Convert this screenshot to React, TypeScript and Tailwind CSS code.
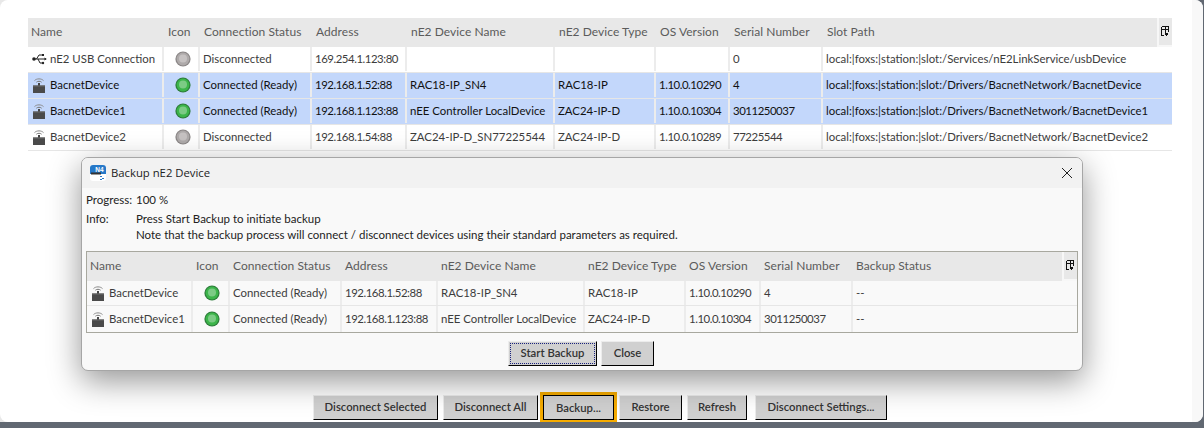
const font = "font-['Lato','Noto_Sans',sans-serif]";

type Row = {
  name: string;
  kind: "usb" | "device";
  on: boolean;
  status: string;
  address: string;
  deviceName: string;
  deviceType: string;
  os: string;
  serial: string;
  last: string;
  selected?: boolean;
};

const rows: Row[] = [
  { name: "nE2 USB Connection", kind: "usb", on: false, status: "Disconnected", address: "169.254.1.123:80", deviceName: "", deviceType: "", os: "", serial: "0", last: "local:|foxs:|station:|slot:/Services/nE2LinkService/usbDevice" },
  { name: "BacnetDevice", kind: "device", on: true, status: "Connected (Ready)", address: "192.168.1.52:88", deviceName: "RAC18-IP_SN4", deviceType: "RAC18-IP", os: "1.10.0.10290", serial: "4", last: "local:|foxs:|station:|slot:/Drivers/BacnetNetwork/BacnetDevice", selected: true },
  { name: "BacnetDevice1", kind: "device", on: true, status: "Connected (Ready)", address: "192.168.1.123:88", deviceName: "nEE Controller LocalDevice", deviceType: "ZAC24-IP-D", os: "1.10.0.10304", serial: "3011250037", last: "local:|foxs:|station:|slot:/Drivers/BacnetNetwork/BacnetDevice1", selected: true },
  { name: "BacnetDevice2", kind: "device", on: false, status: "Disconnected", address: "192.168.1.54:88", deviceName: "ZAC24-IP-D_SN77225544", deviceType: "ZAC24-IP-D", os: "1.10.0.10289", serial: "77225544", last: "local:|foxs:|station:|slot:/Drivers/BacnetNetwork/BacnetDevice2" },
];

const backupRows: Row[] = [
  { ...rows[1], selected: false, last: "--" },
  { ...rows[2], selected: false, last: "--" },
];

const Led = ({ on }: { on: boolean }) => (
  <svg width="16" height="16" viewBox="0 0 16 16">
    <circle cx="8" cy="8" r="7.6" fill={on ? "#2f7d3c" : "#8b8787"} />
    <circle cx="8" cy="8" r="6.4" fill={on ? "#3cb54a" : "#aeaaaa"} />
    <circle cx="8" cy="7.6" r="4" fill={on ? "#7ccb85" : "#c6c2c2"} />
  </svg>
);

const DeviceIcon = () => (
  <svg width="14" height="16" viewBox="0 0 14 16" fill="none">
    <path d="M2.5 3.6C4.6 1.3 9.4 1.3 11.5 3.6" stroke="#8a8a8a" strokeWidth="1" />
    <path d="M4.4 5.2C5.6 4 8.4 4 9.6 5.2" stroke="#777" strokeWidth="1" />
    <rect x="6" y="6" width="2" height="3" fill="#444" />
    <rect x="1" y="8.5" width="12" height="7.5" fill="#4a4a4a" />
    <rect x="1" y="8.5" width="12" height="1" fill="#6b6b6b" />
  </svg>
);

const UsbIcon = () => (
  <svg width="15" height="12" viewBox="0 0 15 12" fill="none">
    <circle cx="2" cy="6" r="1.8" fill="#222" />
    <path d="M2 6H14" stroke="#222" />
    <path d="M4.5 6L7 2H10M6 6L8 10H10" stroke="#222" />
    <rect x="10" y="1" width="2" height="2" fill="#222" />
    <circle cx="11" cy="10" r="1.2" fill="#222" />
    <path d="M12.5 4.5L14.8 6L12.5 7.5Z" fill="#222" />
  </svg>
);

const ColumnMenu = () => (
  <svg width="8" height="11" viewBox="0 0 8 11" shapeRendering="crispEdges" fill="none">
    <path d="M.5.5H7.5V5.5M.5.5V9.5H3M.5 3H7.5M4 .5V7" stroke="#111" />
    <path d="M3 6.5H8L5.5 10Z" fill="#111" />
  </svg>
);

const AppLogo = () => (
  <svg width="16" height="16" viewBox="0 0 16 16">
    <rect width="16" height="16" rx="3" fill="#fff" />
    <path d="M3 0H13A3 3 0 0 1 16 3V9H0V3A3 3 0 0 1 3 0Z" fill="#2678c8" />
    <text x="9.5" y="6.5" fontSize="6.5" fontWeight="700" fill="#fff" textAnchor="middle" fontFamily="Liberation Sans, sans-serif">N4</text>
    <rect x="1" y="7.5" width="10" height="2" fill="#333" />
    <rect x="10" y="11" width="2" height="1" fill="#2678c8" />
    <rect x="12" y="13" width="2" height="1" fill="#2678c8" />
    <rect x="10" y="14" width="2" height="1" fill="#2678c8" />
  </svg>
);

const Header = ({ grid, labels, cellPad }: { grid: string; labels: string[]; cellPad: string }) => (
  <div className={`${grid} h-[29px] bg-[#e8e8e8] text-[#5b5b5b] text-[12px] tracking-[0.05px]`}>
    {labels.map((label, i) => (
      <div key={label} className={`relative flex items-center ${cellPad} pb-[1px] whitespace-nowrap`}>
        {label}
        {i === labels.length - 1 && (
          <div className="absolute right-0 top-0 bottom-0 w-[15px] border-l-2 border-b-2 border-[#f7f7f7] flex items-center justify-center pr-[2px]">
            <ColumnMenu />
          </div>
        )}
      </div>
    ))}
  </div>
);

const Cell = ({ children, className = "" }: { children?: React.ReactNode; className?: string }) => (
  <div className={`flex items-center pl-[3px] border-r-2 border-[#ececec] last:border-r-0 whitespace-nowrap overflow-hidden ${className}`}>
    {children}
  </div>
);

const DataRow = ({ row, grid, height }: { row: Row; grid: string; height: string }) => {
  const sep = row.selected ? "border-[#d9e5fb]" : "";
  return (
    <div
      className={`${grid} ${height} border-b border-[#e6e6e6] text-[11.4px] ${row.selected ? "bg-[#c3d7fb] text-[#111] border-[#e3ecfb]" : "text-[#3c3c3c]"}`}
    >
      <Cell className={sep}>
        <span className="flex w-[19px] shrink-0 pl-[1px]">
          {row.kind === "usb" ? <UsbIcon /> : <DeviceIcon />}
        </span>
        {row.name}
      </Cell>
      <Cell className={`justify-center pl-0 ${sep}`}>
        <Led on={row.on} />
      </Cell>
      <Cell className={sep}>{row.status}</Cell>
      <Cell className={`tracking-[-0.45px] ${sep}`}>{row.address}</Cell>
      <Cell className={sep}>{row.deviceName}</Cell>
      <Cell className={sep}>{row.deviceType}</Cell>
      <Cell className={`tracking-[-0.45px] ${sep}`}>{row.os}</Cell>
      <Cell className={`tracking-[-0.45px] ${sep}`}>{row.serial}</Cell>
      <Cell>{row.last}</Cell>
    </div>
  );
};

const Button = ({ children, className = "" }: { children: React.ReactNode; className?: string }) => (
  <button
    className={`h-[25px] bg-[#d0d0d0] border-t border-l border-[#ececec] border-r border-b border-r-black border-b-black text-[11.3px] font-semibold text-[#333] ${className}`}
  >
    {children}
  </button>
);

const mainGrid = "grid grid-cols-[136px_36px_112px_95px_148px_101px_74px_93px_349px]";
const dialogGrid = "grid grid-cols-[106px_37px_112px_96px_147px_101px_75px_92px_224px]";

export default function App() {
  return (
    <div className={`${font} w-[1204px] h-[428px] overflow-hidden flex flex-col bg-[#616872] text-[12px]`}>
      <div className="relative h-[422px] bg-[linear-gradient(90deg,#e8e8e8_0,#e8e8e8_12px,#616872_12px)]">
        <div className="h-full w-[1203px] rounded-[8px] bg-white flex overflow-hidden">
          <div className="w-[1192px] flex flex-col pl-[28px] pr-[20px] pt-[18px]">
            <Header
              grid={mainGrid}
              cellPad="pl-[4px] first:pl-[3px]"
              labels={["Name", "Icon", "Connection Status", "Address", "nE2 Device Name", "nE2 Device Type", "OS Version", "Serial Number", "Slot Path"]}
            />
            <div className="flex flex-col">
              {rows.map((row) => (
                <DataRow key={row.name} row={row} grid={mainGrid} height="h-[26px] pb-[1px]" />
              ))}
            </div>
            <div className="mt-auto mb-[2px] flex justify-center gap-[5px] items-end">
              <Button className="w-[125px]">Disconnect Selected</Button>
              <Button className="w-[95px]">Disconnect All</Button>
              <Button className="w-[71px] pt-[2px] outline-[3px] outline-[#f5ab00] border-black">Backup...</Button>
              <Button className="w-[63px]">Restore</Button>
              <Button className="w-[60px]">Refresh</Button>
              <Button className="w-[132px] ml-[3px]">Disconnect Settings...</Button>
            </div>
          </div>
          <div className="flex-1 bg-[#f8f8f8]" />
        </div>

        {/* modal dialog sits over the page */}
        <div className="absolute left-[81px] top-[157px] w-[1002px] h-[214px] rounded-[7px] border border-[#a6a6a6] bg-[#f9f9f9] shadow-[0_10px_32px_rgba(0,0,0,0.42)] flex flex-col overflow-hidden">
          <div className="h-[30px] shrink-0 bg-[#f2f2f2] flex items-center pl-[8px] pr-[9px] font-['Open_Sans',sans-serif] text-[11.3px] text-[#222]">
            <AppLogo />
            <span className="ml-[5px]">Backup nE2 Device</span>
            <svg className="ml-auto" width="12" height="12" viewBox="0 0 12 12" fill="none">
              <path d="M1 1L11 11M11 1L1 11" stroke="#222" strokeWidth="1" />
            </svg>
          </div>
          <div className="flex flex-col flex-1 px-[4px] text-[#222] text-[11.5px]">
            <div className="flex h-[16px] mt-[4px] items-center">
              <span className="w-[50px]">Progress:</span>
              <span>100 %</span>
            </div>
            <div className="flex mt-[3px] leading-[16px]">
              <span className="w-[50px]">Info:</span>
              <div>
                <div>Press Start Backup to initiate backup</div>
                <div>Note that the backup process will connect / disconnect devices using their standard parameters as required.</div>
              </div>
            </div>
            <div className="mt-[8px] h-[82px] border border-[#a8a89f] flex flex-col">
              <Header
                grid={dialogGrid}
                cellPad="pl-[3px]"
                labels={["Name", "Icon", "Connection Status", "Address", "nE2 Device Name", "nE2 Device Type", "OS Version", "Serial Number", "Backup Status"]}
              />
              {backupRows.map((row) => (
                <DataRow key={row.name} row={row} grid={dialogGrid} height="h-[25px] last:h-[26px] last:border-b-0" />
              ))}
            </div>
            <div className="flex justify-center gap-[4px] mt-[8px] pr-[2px]">
              <Button className="w-[89px] outline-1 outline-dotted outline-offset-[-3px] outline-[#1a237e]">Start Backup</Button>
              <Button className="w-[53px]">Close</Button>
            </div>
          </div>
        </div>
      </div>
    </div>
  );
}
